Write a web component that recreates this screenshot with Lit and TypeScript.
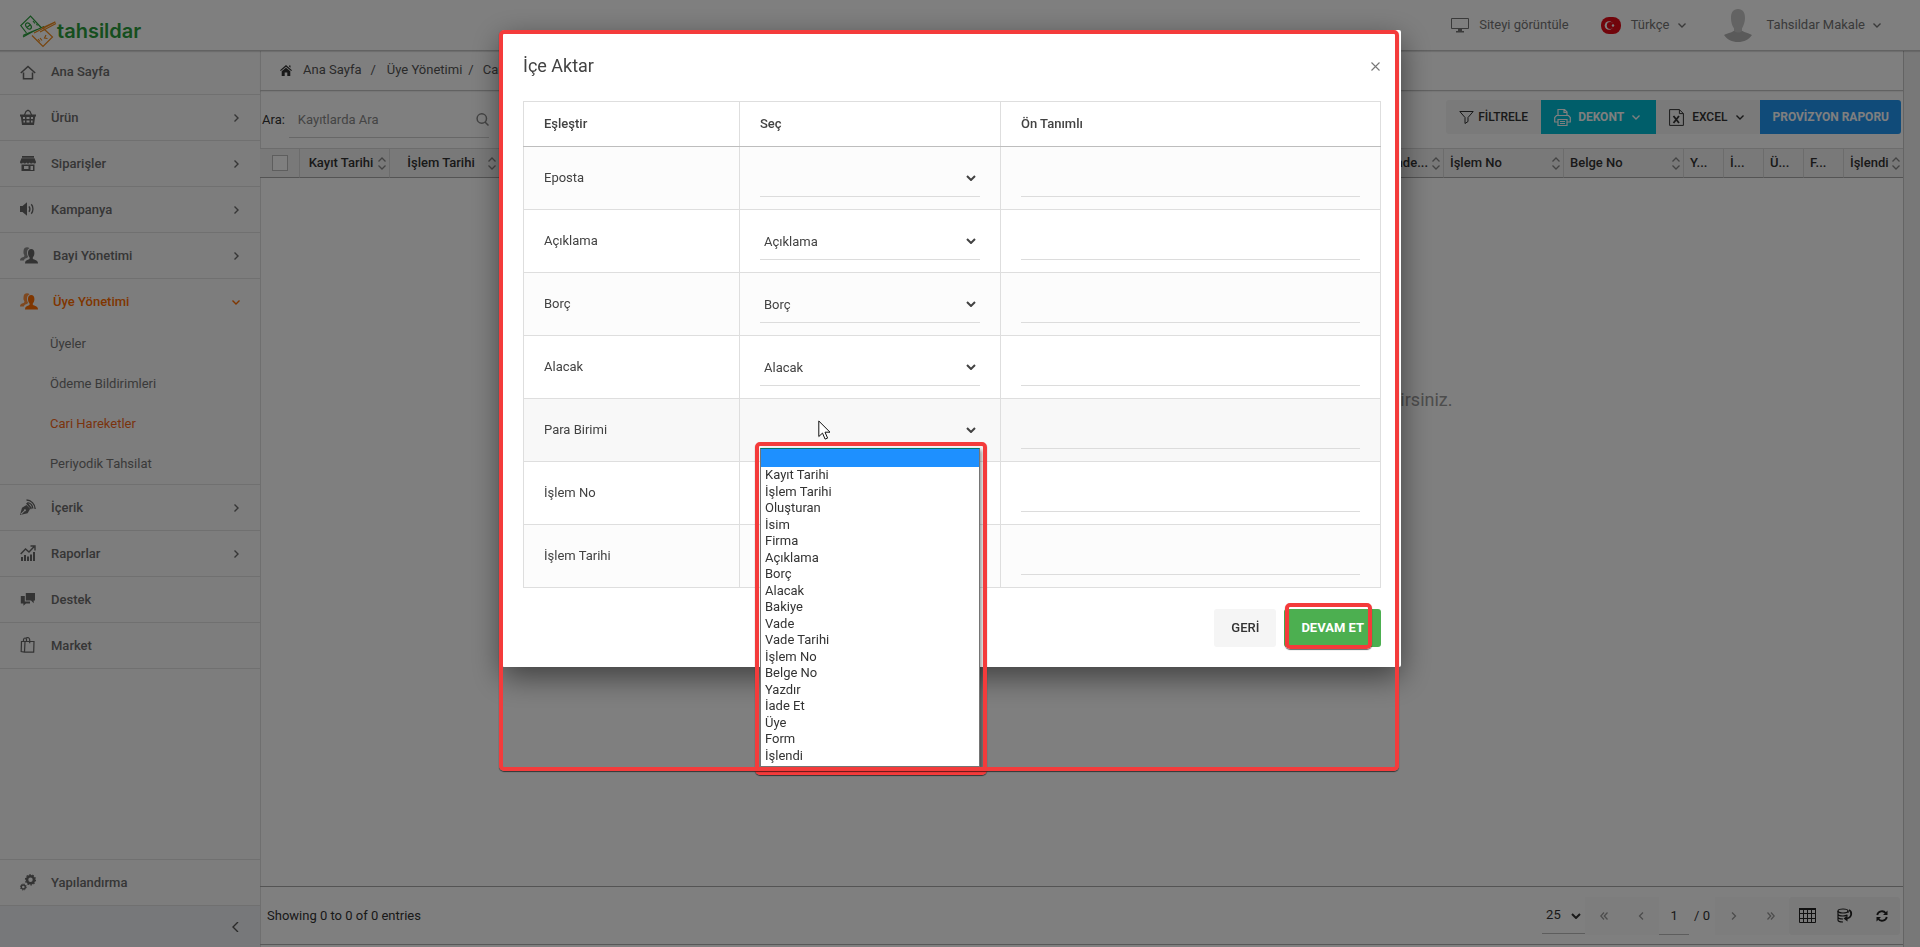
import { LitElement, html, css, svg, nothing } from "lit";
import { customElement, state } from "lit/decorators.js";
import { classMap } from "lit/directives/class-map.js";

interface MenuItem {
  label: string;
  icon: unknown;
  arrow?: boolean;
  children?: string[];
}

const people = svg`
  <path opacity=".75" d="M0 13.500c0-2.300 1-2.800 3.600-3.600 1-.4 1-1.400.4-2.300C3.300 6.500 3.400 5 3.600 3.500 3.800 1.300 5.200.200 7 .200c1 0 1.900.4 2.500 1.100C7.500 2.300 6.900 4 7 6c0 1.800.5 2.800 1.200 4-.4 1-3.700 1-4.400 3.500z"/>
  <path d="M5 16.500c0-2.800 1.300-3.400 4-4.300.9-.4.900-1.600.1-2.500C8.300 8.700 8 7.300 8 6c0-2.500 1.200-4 3.200-4s3.200 1.500 3.200 4c0 1.300-.3 2.700-1.100 3.700-.8.9-.8 2.100.1 2.500 2.700.9 4.600 1.500 4.600 4.300z"/>`;

const MENU: MenuItem[] = [
  { label: "Ana Sayfa", icon: svg`<path d="M.8 9 8 2.500 15.200 9M3.500 8.500v6.200h9V8.500" fill="none" stroke="currentColor" stroke-width="1.500"/>` },
  { label: "Ürün", arrow: true, icon: svg`<path d="M4 7 6 2.500 8 1.200l2 1.300L12 7" fill="none" stroke="currentColor" stroke-width="1.200"/><path fill-rule="evenodd" d="M0 5.500h16v2h-.8L14 16H2L.8 7.500H0zM3 8v2h2V8zm3.500 0v2h3V8zm4.500 0v2h2V8zM3.400 11.500v2H5v-2zm3.100 0v2h3v-2zm4.500 0v2h1.600v-2z"/>` },
  { label: "Siparişler", arrow: true, icon: svg`<path fill-rule="evenodd" d="M2 1h12v1.800H2zM1.500 3.300h13L16 7c0 1-.8 1.500-1.500 1.500S13 8 13 7.200C13 8 12 8.500 11.300 8.500s-1.600-.5-1.600-1.300C9.700 8 8.700 8.500 8 8.500s-1.600-.5-1.600-1.300C6.400 8 5.300 8.500 4.700 8.500 4 8.500 3 8 3 7.200 3 8 2.300 8.500 1.500 8.500S0 8 0 7zM1.500 9.500h13V16h-13zM4 11v3h4.500v-3zm6.500 0v4h2.500v-4z"/>` },
  { label: "Kampanya", arrow: true, icon: svg`<path d="M0 5h2.500L7 1.200v13.600L2.500 11H0z"/><path d="M9 5.300c1 1.500 1 4 0 5.500M11.300 3.300c2.200 2.500 2.200 7 0 9.400" fill="none" stroke="currentColor" stroke-width="1.300"/>` },
  { label: "Bayi Yönetimi", arrow: true, icon: people },
  { label: "Üye Yönetimi", arrow: true, icon: people, children: ["Üyeler", "Ödeme Bildirimleri", "Cari Hareketler", "Periyodik Tahsilat"] },
  { label: "İçerik", arrow: true, icon: svg`<path fill-rule="evenodd" d="M0 16 2 8.700 6.500 6l3.700 3.700-2.600 4.500zm1.400-.5 3.300-3.300a1 1 0 1 0-.7-.7L.7 14.800z"/><path d="M6 4.600 7.600 3.500 12 9l-1 1.400z"/><path d="M6.500 1C11 1 15 5 15.200 10M7.500 3.600C10.500 4 12.500 6.500 12.800 9.500" fill="none" stroke="currentColor" stroke-width="1.400"/>` },
  { label: "Raporlar", arrow: true, icon: svg`<path d="M1 12h2v4H1zm3-2h2v6H4zm3 1.500h2V16H7zm3-2h2V16h-2zM13 7h2v9h-2z"/><path d="m.7 9 4.800-5L9 7l5-5.300M10.500 1H15v4.500" fill="none" stroke="currentColor" stroke-width="1.400"/>` },
  { label: "Destek", icon: svg`<path d="M6.500 2h8.500v7.500h-1.300v2.800L11 9.500H5.800V2z"/><path d="M.8 5h4v5.500H10v2H6l-2.600 2.300v-2.300H.8z"/>` },
  { label: "Market", icon: svg`<path d="M5 4.500h9l-.3 10.700L4.500 15zM5 4.500H1.500L1.200 14.500l3.300.7M3.500 4.500V2.700C4 .5 6 .5 6.500 2.500v2M6 1c2-1 3.500 0 3.700 1.700v3.500" fill="none" stroke="currentColor" stroke-width="1.200"/>` },
];

const FIELDS = ["Kayıt Tarihi", "İşlem Tarihi", "Oluşturan", "İsim", "Firma", "Açıklama", "Borç", "Alacak", "Bakiye", "Vade", "Vade Tarihi", "İşlem No", "Belge No", "Yazdır", "İade Et", "Üye", "Form", "İşlendi"];

const ROWS = [
  { label: "Eposta", value: "" },
  { label: "Açıklama", value: "Açıklama" },
  { label: "Borç", value: "Borç" },
  { label: "Alacak", value: "Alacak" },
  { label: "Para Birimi", value: "" },
  { label: "İşlem No", value: "" },
  { label: "İşlem Tarihi", value: "" },
];

const COLUMNS = [
  { label: "Kayıt Tarihi", cls: "w90 mid", sort: true },
  { label: "İşlem Tarihi", cls: "w110 mid", sort: true },
  { label: "", cls: "", sort: false },
  { label: "Vade...", cls: "w60 end", sort: true },
  { label: "İşlem No", cls: "w120", sort: true },
  { label: "Belge No", cls: "w120", sort: true },
  { label: "Y...", cls: "w40", sort: false },
  { label: "İ...", cls: "w40", sort: false },
  { label: "Ü...", cls: "w40", sort: false },
  { label: "F...", cls: "w40", sort: false },
  { label: "İşlendi", cls: "w59", sort: true },
];

const chevron = (dir: "right" | "down" | "left") => {
  const d = { right: "M3.500 1.500 7 5 3.500 8.500", down: "M1.500 3.500 5 7l3.500-3.500", left: "M7 0 2 5l5 5" }[dir];
  return html`<svg class="chev" width="10" height="10" viewBox="0 0 10 10" aria-hidden="true"><path d=${d} fill="none" stroke="currentColor" stroke-width="1.4"/></svg>`;
};

const boldChevron = html`<svg class="caret" width="10" height="6" viewBox="0 0 10 6" aria-hidden="true"><path d="M1 1l4 4 4-4" fill="none" stroke="currentColor" stroke-width="2"/></svg>`;

@customElement("app-root")
export class AppRoot extends LitElement {
  @state() private openRow = "Para Birimi";

  static styles = css`
    :host {
      display: block;
      font: 13px/20px Roboto, "Noto Sans", sans-serif;
      color: #424242;
    }
    * { box-sizing: border-box; }
    a { color: inherit; text-decoration: none; }
    button, input, select { font: inherit; color: inherit; margin: 0; border: 0; padding: 0; background: none; border-radius: 0; outline: 0; }
    svg { flex: none; display: block; }
    .page { display: flex; flex-direction: column; height: 100vh; background: #fff; overflow: hidden; }

    .top { position: relative; display: flex; align-items: center; justify-content: space-between; height: 50px; padding: 0 38px 0 20px; box-shadow: 0 1px 0 #c4c4c4, 0 2px 1px #0002; color: #757575; flex: none; }
    .brand { display: flex; align-items: center; color: #2a9d3c; font: 600 20px/24px Inter, sans-serif; padding-top: 12px; }
    .tools { display: flex; align-items: center; height: 50px; }
    .tool { display: flex; align-items: center; gap: 10px; margin-left: 32px; }
    .avatar-tool { gap: 15px; margin-left: 37px; }
    .name { display: flex; align-items: center; gap: 7px; }

    .body { display: flex; flex: 1; min-height: 0; }
    .side { display: flex; flex-direction: column; width: 260px; flex: none; background: #fafafa; }
    .item { display: flex; align-items: center; height: 46px; padding: 0 19px 0 20px; gap: 15px; border-bottom: 1px solid #e0e0e0; font-weight: 500; font-size: 13px; color: #6c6c6c; }
    .item .icon { color: #666; }
    .item .text { flex: 1; }
    .first { height: 45px; }
    .open, .open .icon { color: #ff6d00; }
    .open { height: 45px; border-bottom: 0; }
    .sub { display: flex; flex-direction: column; border-bottom: 1px solid #e0e0e0; color: #757575; }
    .sub a { line-height: 40px; padding-left: 50px; }
    .sub .active { color: #f4681a; }
    .space { flex: 1; border-bottom: 1px solid #e0e0e0; }
    .collapse { display: flex; align-items: center; justify-content: flex-end; height: 41px; padding-right: 19px; background: #eff1f4; color: #555; flex: none; }

    .main { display: flex; flex-direction: column; flex: 1; min-width: 0; box-shadow: inset 1px 0 #dedede; border-right: 1px solid #c8c8c8; }
    .rail { width: 16px; background: #f1f1f1; flex: none; }
    .crumbs { display: flex; align-items: center; height: 41px; padding: 0 20px; border-bottom: 1px solid #c4c4c4; box-shadow: 0 1px 1px #0001; color: #555; flex: none; }
    .crumbs svg { margin-right: 11px; color: #333; }
    .crumbs span { margin: 0 11px 0 9px; }
    .crumbs span:last-of-type { margin: 0 9px 0 6px; }
    .bar { display: flex; align-items: center; justify-content: space-between; height: 57px; padding: 0 2px 5px; flex: none; }
    .search { display: flex; align-items: center; gap: 4px; padding-top: 6px; }
    .search label { color: #333; }
    .search .box { display: flex; align-items: center; width: 200px; height: 36px; padding-left: 9px; border-bottom: 1px solid #cfcfcf; color: #888; }
    .search input { flex: 1; min-width: 0; }
    .search input::placeholder { color: #888; opacity: 1; }
    .actions { display: flex; height: 34px; border-radius: 3px; overflow: hidden; font-size: 12px; font-weight: 500; }
    .actions button { display: flex; align-items: center; gap: 7px; padding: 0 13px; background: #f4f4f4; color: #333; }
    .actions .filter { gap: 4px; }
    .actions .teal, .actions .blue { font-weight: 700; color: #fff; }
    .actions .teal { background: #00bcd4; padding-right: 15px; }
    .actions .blue { background: #2196f3; padding: 0 12px; }
    .actions .excel { gap: 8px; padding-right: 15px; }

    .grid { width: 100%; table-layout: fixed; border-spacing: 0; flex: none; }
    .grid th { height: 30px; padding: 0; background: #f3f3f3; border: solid #d8d8d8; border-width: 1px 1px 1px 0; border-bottom-color: #a8a8a8; font-weight: 500; color: #333; }
    .grid th:last-child { border-right: 0; }
    .cell { display: flex; align-items: center; padding: 0 3px 0 6px; gap: 2px; text-align: left; white-space: nowrap; color: #333; }
    .cell span { flex: 1; }
    .cell svg { color: #888; }
    .mid .cell { text-align: center; }
    .end .cell { text-align: right; padding-left: 0; }
    .end span { padding-right: 2px; }
    .w40 { width: 40px; } .w59 { width: 59px; } .w60 { width: 60px; } .w90 { width: 90px; } .w110 { width: 110px; } .w120 { width: 120px; }
    .tick { appearance: none; display: block; width: 16px; height: 16px; margin: 0 0 0 12px; border: 1px solid #bdbdbd; background: #fff; }
    .empty { flex: 1; min-height: 0; display: flex; justify-content: center; padding-top: 208px; }
    .empty p { margin: 0; width: 742px; text-align: right; font-size: 18px; line-height: 28px; color: #9a9a9a; }
    .foot { display: flex; align-items: center; justify-content: space-between; height: 59px; margin-bottom: 2px; padding: 0 3px 0 7px; border-top: 1px solid #a8a8a8; border-bottom: 1px solid #b0b0b0; color: #333; flex: none; font-size: 13px; }
    .pager { display: flex; align-items: center; height: 38px; }
    .size { position: relative; display: flex; width: 43px; height: 37px; border-bottom: 1px solid #bbb; }
    .size select { appearance: none; width: 100%; padding-left: 4px; }
    .size .caret { position: absolute; right: 4px; top: 16px; pointer-events: none; }
    .nav { width: 37px; height: 38px; background: #fbfbfb; color: #999; display: grid; place-items: center; }
    .pageno { width: 30px; height: 38px; border-bottom: 1px solid #bbb; text-align: center; }
    .total { padding: 0 5px; }
    .views { display: flex; background: #f5f5f5; border-radius: 3px; }
    .views button { width: 37px; height: 38px; display: grid; place-items: center; color: #222; }

    .veil { position: fixed; inset: 0; display: flex; justify-content: center; align-items: flex-start; padding: 30px 17px 0 0; background: rgba(0, 0, 0, .5); }
    .modal { position: relative; width: 899px; padding: 1px 20px 20px 21px; background: #fff; border-radius: 2px; box-shadow: 0 10px 30px rgba(0, 0, 0, .5); }
    .head { display: flex; align-items: center; justify-content: space-between; padding: 23px 0; }
    .head h2 { margin: 0; font-size: 18px; line-height: 24px; font-weight: 400; color: #424242; }
    .close { color: #777; padding: 1px; }
    .map { width: 100%; table-layout: fixed; border-collapse: collapse; }
    .map th, .map td { padding: 12px 20px; border: 1px solid #dedede; text-align: left; }
    .map th { height: 45px; font-weight: 500; border-bottom-color: #bdbdbd; }
    .map tbody tr:nth-child(odd) { background: #fcfcfc; }
    .map tbody tr.hover { background: #f8f8f8; }
    .c1 { width: 216px; } .c2 { width: 261px; }
    .pick { position: relative; height: 38px; }
    .pick select { appearance: none; display: block; width: 100%; height: 38px; padding: 2px 4px 0; border-bottom: 1px solid #dcdcdc; }
    .pick > .caret { position: absolute; right: 4px; top: 16px; pointer-events: none; }
    .preset { display: block; width: 100%; height: 38px; border-bottom: 1px solid #dcdcdc; }
    .options { position: absolute; z-index: 1; top: 37px; left: 0; right: 0; display: flex; flex-direction: column; height: 319px; margin: 0; padding: 0 0 2px; list-style: none; background: #fff; border: 1px solid #757575; border-top-color: #00796b; box-shadow: 2px 2px 4px #0006; }
    .options li { display: flex; align-items: center; flex: 1; padding-left: 4px; line-height: 16px; color: #333; }
    .options .blank { flex: 0 0 18px; background: #1e90ff; }
    .mark { position: absolute; border: 4px solid #f43b3b; border-radius: 5px; box-shadow: 0 1px 1px #0009; pointer-events: none; z-index: 2; }
    .mark-list { inset: 31px -7px -326px -5px; }
    .mark-modal { inset: 0 2px -104px -3px; }
    .mark-go { inset: -6px 9px -2px 1px; }
    .pointer { position: absolute; left: 58px; top: 9px; }
    .btns { display: flex; justify-content: flex-end; gap: 8px; padding-top: 21px; }
    .btn { height: 38px; padding: 0 17px; border-radius: 3px; background: #f5f5f5; font-weight: 500; color: #333; }
    .go { position: relative; background: #4caf50; color: #fff; font-weight: 700; }
  `;

  private icon(content: unknown, w = 16) {
    return html`<svg class="icon" width=${w} height="17" viewBox="0 0 ${w} 17" fill="currentColor" aria-hidden="true">${content}</svg>`;
  }

  private menuItem(m: MenuItem, i: number) {
    const open = !!m.children;
    return html`
      <a href="#" class=${classMap({ item: true, first: i === 0, open })}>
        ${this.icon(m.icon, m.icon === people ? 18 : 16)}
        <span class="text">${m.label}</span>
        ${m.arrow ? chevron(open ? "down" : "right") : nothing}
      </a>
      ${m.children
        ? html`<div class="sub">${m.children.map((c) => html`<a href="#" class=${classMap({ active: c === "Cari Hareketler" })}>${c}</a>`)}</div>`
        : nothing}`;
  }

  private header() {
    return html`
      <header class="top">
        <a href="#" class="brand">
          <svg width="37" height="33" viewBox="0 0 37 33" fill="none" aria-hidden="true">
            <g stroke="#2a9d3c" stroke-width="1.200"><path d="M6.500 18 .8 10.500 10.500 1l11 12"/><ellipse cx="8.500" cy="11" rx="2.300" ry="3.500" transform="rotate(-38 8.500 11)"/><path d="M7.200 12.200 10 10M13 6l2 2.500M16.500 9l1 1.500M3 22l10-5.500 11-5M5 19.500l12-5M3 20.500l3-1.500"/></g>
            <g stroke="#ee8a1d" stroke-width="1.200"><path d="M12 20.500 23 31.500l9.500-9.500-9-8.500M14 18l21.500-11M20 17l16-8.500M22 13l13-6"/><path d="M18 24l2 2.500M20 23l2 2.500M26 20l-1.500 3 3 .5"/></g>
          </svg>tahsildar
        </a>
        <div class="tools">
          <a href="#" class="tool">
            <svg width="18" height="16" viewBox="0 0 18 16" aria-hidden="true"><path d="M.5 1.500h17v10H.5z" fill="none" stroke="currentColor"/><path d="M7 12h4v2h2v1.500H5V14h2z" fill="currentColor"/></svg>
            Siteyi görüntüle
          </a>
          <a href="#" class="tool">
            <svg width="20" height="17" viewBox="0 0 20 17" aria-hidden="true"><rect width="20" height="17" rx="8" fill="#e30a17"/><circle cx="8" cy="8.500" r="4.300" fill="#fff"/><circle cx="9.200" cy="8.500" r="3.400" fill="#e30a17"/><circle cx="12" cy="8.500" r="1.200" fill="#fff"/></svg>
            <span class="name">Türkçe ${chevron("down")}</span>
          </a>
          <a href="#" class="tool avatar-tool">
            <svg width="28" height="33" viewBox="0 0 28 33" aria-hidden="true"><path d="M0 26c4-2 8-2.500 9.500-4h9c2 1.500 6 2 9.500 4-3 4.500-8 7-14 7S3 30.500 0 26z" fill="#b4b4b4"/><path d="M14 0c5 0 7 3.500 7 9 0 4-1.500 8-3 10.500V22c-2 2-5 2-8 0v-2.500C8 17 7 13 7 9c0-5.500 2-9 7-9z" fill="#c6c6c6"/></svg>
            <span class="name">Tahsildar Makale ${chevron("down")}</span>
          </a>
        </div>
      </header>`;
  }

  private sort() {
    return html`<svg width="8" height="13" viewBox="0 0 8 13" fill="none" stroke="currentColor" stroke-width="1.300" aria-hidden="true"><path d="M.5 4.500 4 1l3.500 3.500M.5 8.500 4 12l3.500-3.500"/></svg>`;
  }

  private toolbar() {
    return html`
      <div class="bar">
        <div class="search">
          <label for="q">Ara:</label>
          <div class="box">
            <input id="q" type="search" placeholder="Kayıtlarda Ara" />
            <svg width="13" height="13" viewBox="0 0 13 13" fill="none" stroke="currentColor" stroke-width="1.500" aria-hidden="true"><circle cx="5.800" cy="5.500" r="4.700"/><path d="M9 9l3.500 3.500"/></svg>
          </div>
        </div>
        <div class="actions">
          <button class="filter"><svg width="15" height="13" viewBox="0 0 15 13" fill="none" stroke="currentColor" aria-hidden="true"><path d="M.8.5h13.400L9 6.500v4L6 12.500v-6z"/></svg>FİLTRELE</button>
          <button class="teal"><svg width="17" height="17" viewBox="0 0 17 17" fill="none" stroke="currentColor" stroke-width="1.200" aria-hidden="true"><path d="M4 6.500v-6h6.500L13 3v3.500M10 .5v3h3M3.500 13H.7V8.500L2.500 6.500h12l1.800 2V13h-2.800M4 10.500h9v6H4zM6 12.500h5M6 14.500h5"/></svg>DEKONT ${chevron("down")}</button>
          <button class="excel"><svg width="15" height="17" viewBox="0 0 15 17" fill="none" stroke="currentColor" aria-hidden="true"><path d="M.6.600h9.800L14.400 4.600v11.800H.6zM10.400.6v4h4"/><path d="M4.500 7l5.500 7M10 7l-5.500 7" stroke-width="1.800"/></svg>EXCEL ${chevron("down")}</button>
          <button class="blue">PROVİZYON RAPORU</button>
        </div>
      </div>`;
  }

  private footer() {
    return html`
      <footer class="foot">
        <span>Showing 0 to 0 of 0 entries</span>
        <div class="pager">
          <div class="size"><select aria-label="Sayfa boyutu"><option>25</option></select>${boldChevron}</div>
          <button class="nav" aria-label="İlk"><svg width="8" height="8" viewBox="0 0 8 8" fill="none" stroke="currentColor" stroke-width="1.300"><path d="M4 .5.800 4 4 7.500M7.500.5 4.300 4l3.200 3.500"/></svg></button>
          <button class="nav" aria-label="Önceki"><svg width="8" height="8" viewBox="0 0 8 8" fill="none" stroke="currentColor" stroke-width="1.300"><path d="M6 .5 2.500 4 6 7.500"/></svg></button>
          <input class="pageno" aria-label="Sayfa" value="1" /><span class="total">/ 0</span>
          <button class="nav" aria-label="Sonraki"><svg width="8" height="8" viewBox="0 0 8 8" fill="none" stroke="currentColor" stroke-width="1.300"><path d="M2 .5 5.500 4 2 7.500"/></svg></button>
          <button class="nav" aria-label="Son"><svg width="8" height="8" viewBox="0 0 8 8" fill="none" stroke="currentColor" stroke-width="1.300"><path d="M.5.500 3.700 4 .5 7.500M4 .5 7.200 4 4 7.500"/></svg></button>
          <div class="views">
            <button aria-label="Tablo"><svg width="17" height="15" viewBox="0 0 17 15" fill="none" stroke="currentColor"><path d="M.5 1h16v13.500H.5zM.5 5.500h16M.5 10.500h16M4.500 1v13.500M8.500 1v13.500M12.500 1v13.500"/><path d="M0 1h17" stroke-width="2"/></svg></button>
            <button aria-label="Veri"><svg width="16" height="15" viewBox="0 0 16 15" fill="none" stroke="currentColor" stroke-width="1.200"><ellipse cx="6" cy="3" rx="5" ry="2"/><path d="M1 3v9c0 1 2 2 5 2M1 6c0 1 2 2 5 2s4-.8 4.500-1M1 9c0 1 2 2 5 2M11 3v2"/><path d="M12 2c3 1.500 3.500 7-2 8.500" stroke-width="1.800"/><path d="M10.500 7.500v6L6.500 10.500z" fill="currentColor" stroke="none"/></svg></button>
            <button aria-label="Yenile"><svg width="12" height="12" viewBox="0 0 12 12" fill="none" stroke="currentColor" stroke-width="1.800"><path d="M1.200 5C2 1 7.500 0 9.800 3.200M10.800 7C10 11 4.500 12 2.200 8.800"/><path d="M11.500.500v4.500H7zM.5 11.500V7H5z" fill="currentColor" stroke="none"/></svg></button>
          </div>
        </div>
      </footer>`;
  }

  private mapRow(row: { label: string; value: string }, i: number) {
    const open = row.label === this.openRow;
    return html`
      <tr class=${classMap({ hover: open })}>
        <td><label for="f${i}">${row.label}</label></td>
        <td>
          <div class="pick">
            <select id="f${i}">
              <option ?selected=${!row.value}></option>
              ${FIELDS.map((f) => html`<option ?selected=${f === row.value}>${f}</option>`)}
            </select>
            ${boldChevron}
            ${open
              ? html`
                  <svg class="pointer" width="14" height="21" viewBox="0 0 14 21" aria-hidden="true"><path d="M.8 1v15.500l3.700-3.400 2.600 6 2.500-1-2.600-5.900h5z" fill="#fff" stroke="#111"/></svg>
                  <ul class="options" role="listbox" aria-label=${row.label}>
                    <li class="blank" role="option" aria-selected="true"></li>
                    ${FIELDS.map((f) => html`<li role="option">${f}</li>`)}
                  </ul>
                  <div class="mark mark-list"></div>`
              : nothing}
          </div>
        </td>
        <td><input class="preset" aria-label="${row.label} ön tanımlı" /></td>
      </tr>`;
  }

  private dialog() {
    return html`
      <div class="veil">
        <section class="modal" role="dialog" aria-labelledby="title">
          <div class="head">
            <h2 id="title">İçe Aktar</h2>
            <button class="close" aria-label="Kapat"><svg width="9" height="9" viewBox="0 0 9 9" stroke="currentColor" stroke-width="1.100"><path d="M.5.5l8 8M8.500.5l-8 8"/></svg></button>
          </div>
          <table class="map">
            <thead><tr><th class="c1">Eşleştir</th><th class="c2">Seç</th><th>Ön Tanımlı</th></tr></thead>
            <tbody>${ROWS.map((r, i) => this.mapRow(r, i))}</tbody>
          </table>
          <div class="btns">
            <button class="btn">GERİ</button>
            <button class="btn go">DEVAM ET<span class="mark mark-go"></span></button>
          </div>
          <div class="mark mark-modal"></div>
        </section>
      </div>`;
  }

  render() {
    return html`
      <div class="page">
        ${this.header()}
        <div class="body">
          <nav class="side">
            ${MENU.map((m, i) => this.menuItem(m, i))}
            <div class="space"></div>
            ${this.menuItem({
              label: "Yapılandırma",
              icon: svg`<circle cx="10.500" cy="5.800" r="3.500" fill="none" stroke="currentColor" stroke-width="2.600"/><circle cx="10.500" cy="5.800" r="5" fill="none" stroke="currentColor" stroke-width="1.200" stroke-dasharray="1.600 1.500"/><circle cx="3.300" cy="13" r="2" fill="none" stroke="currentColor" stroke-width="1.400"/><circle cx="3.300" cy="13" r="3" fill="none" stroke="currentColor" stroke-width="1" stroke-dasharray="1.200 1.150"/>`,
            }, 1)}
            <button class="collapse" aria-label="Daralt">${chevron("left")}</button>
          </nav>
          <main class="main">
            <div class="crumbs">
              <svg width="12" height="11" viewBox="0 0 12 11" fill="currentColor" aria-hidden="true"><path d="M6 0 12 5.200l-.8.9L6 1.700.8 6.100 0 5.200zM9 .5h1.500v2.300L9 1.500zM6 2.700l4.300 3.600V11H7.300V7.500H4.700V11h-3V6.300z"/></svg>
              <a href="#">Ana Sayfa</a><span>/</span><a href="#">Üye Yönetimi</a><span>/</span><a href="#">Cari Hareketler</a>
            </div>
            ${this.toolbar()}
            <table class="grid">
              <thead>
                <tr>
                  <th class="w40"><input class="tick" type="checkbox" aria-label="Tümünü seç" /></th>
                  ${COLUMNS.map((c) => html`<th class=${c.cls}><div class="cell"><span>${c.label}</span>${c.sort ? this.sort() : nothing}</div></th>`)}
                </tr>
              </thead>
            </table>
            <div class="empty"><p>ekleyebilirsiniz.</p></div>
            ${this.footer()}
          </main>
          <div class="rail"></div>
        </div>
        ${this.dialog()}
      </div>`;
  }
}
